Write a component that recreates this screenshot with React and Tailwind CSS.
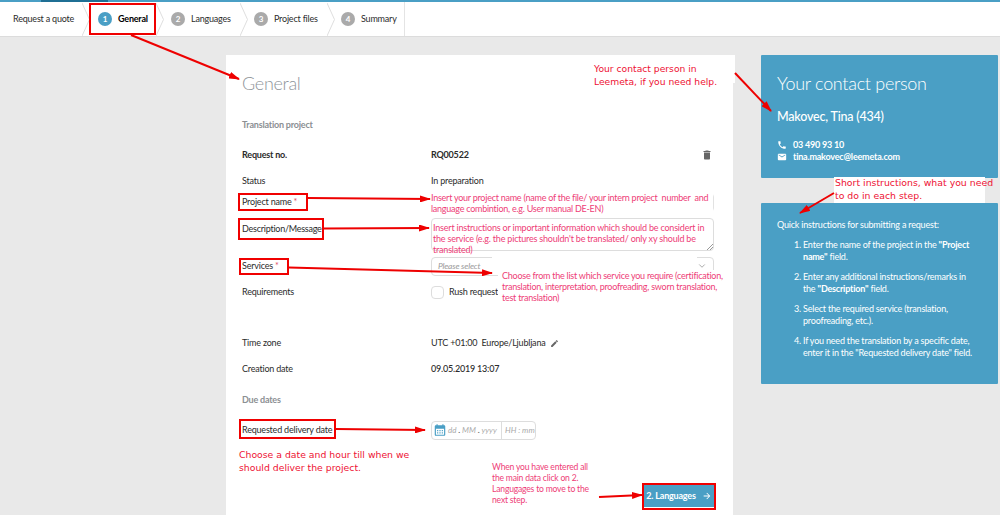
import React from "react";
import { ChevronDown } from "lucide-react";
import { MdDelete, MdPhone, MdEmail, MdEdit, MdArrowForward, MdCalendarMonth } from "react-icons/md";

const steps = [
  { n: 1, label: "General", active: true, cls: "w-[66px] pl-[8px]" },
  { n: 2, label: "Languages", cls: "w-[76px] pl-[7px]" },
  { n: 3, label: "Project files", cls: "w-[79px] pl-[6px]" },
  { n: 4, label: "Summary", cls: "w-[69px] pl-[6px]" },
];

const Chevron = () => (
  <svg width="8" height="33" viewBox="0 0 8 33" className="shrink-0" fill="none" stroke="#dedede">
    <path d="M0 0 L7.5 16.5 L0 33" />
  </svg>
);

const Row = ({ label, bold, height, req, align = "items-center", labelClass = "", children }) => (
  <div className={`flex ${align} ${height}`}>
    <div className={`w-[189px] shrink-0 ${labelClass} ${bold ? "font-bold" : ""}`}>
      {label}
      {req && <span className="text-[#e0506a]"> *</span>}
    </div>
    <div className="flex-1">{children}</div>
  </div>
);

const Box = ({ className }) => <div className={`absolute border-2 border-[#f00000] ${className}`} />;

const Note = ({ className, children }) => (
  <div className={`absolute bg-white ${className}`}>{children}</div>
);

export default function App() {
  return (
    <div className="relative h-[515px] w-[1000px] overflow-hidden bg-[#e9e9e9] font-['Lato',sans-serif] text-[9px] tracking-[-0.2px] text-[#2b2b2b]">
      {/* top bar */}
      <header className="flex h-[37px] flex-col border-b border-[#dcdcdc] bg-white">
        <div className="h-[2px] shrink-0 bg-[#4a9fc5]">
          <div className="ml-[41px] h-full w-[67px] bg-[#1f6f94]" />
        </div>
        <div className="flex flex-1 items-center">
          <span className="ml-[13px] w-[69px]">Request a quote</span>
          <Chevron />
          {steps.map((s) => (
            <React.Fragment key={s.n}>
              <div className={`flex items-center ${s.cls}`}>
                <span className={`flex h-[14px] w-[14px] shrink-0 items-center justify-center rounded-full text-[8px] font-bold text-white ${s.active ? "bg-[#4a9fc5]" : "bg-[#aaaaaa]"}`}>
                  {s.n}
                </span>
                <span className={`ml-[6px] whitespace-nowrap ${s.active ? "font-bold text-black" : ""}`}>{s.label}</span>
              </div>
              {s.n < 4 && <Chevron />}
            </React.Fragment>
          ))}
          <div className="h-full border-l border-[#e4e4e4]" />
        </div>
      </header>

      <main className="flex items-start pl-[226px] pt-[18px]">
        {/* form card */}
        <section className="h-[470px] w-[507px] bg-white px-[16px]">
          <h1 className="pt-[16px] text-[18px] leading-[24px] font-light tracking-[-0.3px] text-[#8f959a]">General</h1>
          <h2 className="mt-[24px] leading-[12px] font-bold text-[#8b8f93]">Translation project</h2>

          <div className="mt-[11px]">
            <Row label="Request no." bold height="h-[26px]">
              <div className="flex items-center justify-between pr-[4px]">
                <span className="font-bold">RQ00522</span>
                <MdDelete size={12} className="text-[#666666]" />
              </div>
            </Row>
            <Row label="Status" height="h-[25px]">In preparation</Row>
            <Row label="Project name" req height="h-[18px]">
              <div className="h-[19px] w-[283px] rounded-sm border border-[#e2e2e2]" />
            </Row>
            <Row label="Description/Message" align="items-start" labelClass="pt-[11px] tracking-[-0.25px]" height="h-[42px]">
              <div className="relative mt-[7px] h-[33px] w-[283px] rounded-sm border border-[#dddddd]">
                <svg className="absolute right-0 bottom-0" width="6" height="6" viewBox="0 0 6 6" stroke="#999999" fill="none">
                  <path d="M0 6 L6 0 M3 6 L6 3" />
                </svg>
              </div>
            </Row>
            <Row label="Services" req height="h-[26px]">
              <div className="flex h-[19px] w-[283px] items-center justify-between rounded-sm border border-[#dddddd] px-[6px] text-[8.5px] text-[#9a9a9a] italic">
                Please select
                <ChevronDown size={10} />
              </div>
            </Row>
            <Row label="Requirements" height="h-[26px]">
              <label className="flex items-center gap-[5px]">
                <span className="h-[13px] w-[13px] rounded-sm border border-[#dddddd]" />
                Rush request
              </label>
            </Row>
            <div className="h-[25px]" />
            <Row label="Time zone" height="h-[26px]">
              <span className="flex items-center gap-[4px]">
                UTC +01:00&nbsp; Europe/Ljubljana <MdEdit size={9} className="text-[#666666]" />
              </span>
            </Row>
            <Row label="Creation date" height="h-[26px]">
              <span className="font-medium">09.05.2019 13:07</span>
            </Row>
          </div>

          <h2 className="mt-[12px] leading-[12px] font-bold text-[#8b8f93]">Due dates</h2>

          <div className="mt-[14px]">
            <Row label="Requested delivery date" height="h-[20px]">
              <div className="flex h-[19px] w-[105px] items-center rounded-sm border border-[#dddddd] text-[8px] tracking-normal text-[#aaaaaa] italic">
                <MdCalendarMonth size={14} className="ml-[1px] shrink-0 text-[#4a9fc5]" />
                <span className="ml-[1px] w-[53px] shrink-0 whitespace-pre">dd <b className="text-[#666666] not-italic">.</b> MM <b className="text-[#666666] not-italic">.</b> yyyy</span>
                <span className="h-full border-l border-[#dddddd] pl-[3px] leading-[17px] whitespace-pre">HH : mm</span>
              </div>
            </Row>
          </div>

          <div className="mt-[45px] flex justify-end pr-[3px]">
            <button className="flex h-[22px] w-[70px] items-center justify-center gap-[6px] bg-[#4a9fc5] font-bold text-white">
              2. Languages <MdArrowForward size={10} />
            </button>
          </div>
        </section>

        {/* right column */}
        <aside className="ml-[28px] w-[237px] text-white">
          <div className="h-[123px] rounded-[1px] bg-[#4a9fc5] px-[16px] pt-[16px]">
            <h2 className="text-[18px] leading-[24px] font-light tracking-[-0.3px] text-white">Your contact person</h2>
            <p className="mt-[14px] text-[12.5px] leading-[16px] font-medium">Makovec, Tina (434)</p>
            <p className="mt-[14px] flex items-center gap-[6px] leading-[12px] font-bold">
              <MdPhone size={10} /> 03 490 93 10
            </p>
            <p className="flex items-center gap-[6px] leading-[12px] font-bold">
              <MdEmail size={10} /> tina.makovec@leemeta.com
            </p>
          </div>
          <div className="mt-[25px] h-[181px] rounded-[1px] bg-[#4a9fc5] px-[16px] pt-[16px] leading-[12px]">
            <p>Quick instructions for submitting a request:</p>
            <ol className="mt-[8px] list-decimal space-y-[8px] pr-[10px] pl-[26px]">
              <li>Enter the name of the project in the <b>"Project name"</b> field.</li>
              <li>Enter any additional instructions/remarks in the <b>"Description"</b> field.</li>
              <li>Select the required service (translation, proofreading, etc.).</li>
              <li>If you need the translation by a specific date, enter it in the "Requested delivery date" field.</li>
            </ol>
          </div>
        </aside>
      </main>

      {/* annotations drawn over the page */}
      <Note className="left-[560px] top-[55px] h-[28px] w-[175px]" />
      <Note className="left-[834px] top-[177px] h-[26px] w-[151px]" />
      <div className="absolute left-[594px] top-[62px] font-['DejaVu_Sans',sans-serif] text-[9.2px] leading-[13px] tracking-normal text-[#ee1133]">
        Your contact person in<br />Leemeta, if you need help.
      </div>
      <div className="absolute left-[835px] top-[176px] font-['DejaVu_Sans',sans-serif] text-[9.35px] leading-[13px] tracking-normal text-[#ee1133]">
        Short instructions, what you need<br />to do in each step.
      </div>
      <div className="absolute left-[239px] top-[448px] font-['DejaVu_Sans',sans-serif] text-[9.3px] leading-[13px] tracking-normal text-[#ee1133]">
        Choose a date and hour till when we<br />should deliver the project.
      </div>

      <Note className="left-[430px] top-[191px] h-[21px] w-[283px] pl-[1px] pt-[1px] leading-[11px] tracking-[-0.25px] text-[#ee3d77]">
        Insert your project name (name of the file/ your intern project&nbsp; number&nbsp; and<br />
        language combintion, e.g. User manual DE-EN)
      </Note>
      <div className="absolute left-[433px] top-[222px] leading-[11px] text-[#ee3d77]">
        Insert instructions or important information which should be considert in<br />
        the service (e.g. the pictures shouldn't be translated/ only xy should be<br />
        translated)
      </div>
      <Note className="left-[492px] top-[256px] h-[3px] w-[205px]" />
      <Note className="left-[498px] top-[270px] h-[33px] w-[228px] pl-[4px] leading-[11px] tracking-[-0.25px] text-[#ee3d77]">
        Choose from the list which service you require (certification,<br />
        translation, interpretation, proofreading, sworn translation,<br />
        test translation)
      </Note>
      <div className="absolute left-[492px] top-[462px] text-[8.6px] leading-[11px] text-[#ee3d77]">
        When you have entered all<br />the main data click on 2.<br />Langugages to move to the<br />next step.
      </div>

      <Box className="left-[89px] top-[3px] h-[32px] w-[67px]" />
      <Box className="left-[238px] top-[193px] h-[18px] w-[70px]" />
      <Box className="left-[238px] top-[218px] h-[22px] w-[86px]" />
      <Box className="left-[239px] top-[258px] h-[17px] w-[50px]" />
      <Box className="left-[239px] top-[419px] h-[20px] w-[97px]" />
      <Box className="left-[642px] top-[483px] h-[27px] w-[74px]" />

      <svg className="absolute inset-0 h-full w-full" viewBox="0 0 1000 515" fill="none" stroke="#ee0000" strokeWidth="2">
        <defs>
          <marker id="head" markerWidth="11" markerHeight="7" refX="10" refY="3.5" orient="auto" markerUnits="userSpaceOnUse">
            <path d="M0 0 L11 3.5 L0 7 Z" fill="#ee0000" stroke="none" />
          </marker>
        </defs>
        <path d="M131 35 L239 79" markerEnd="url(#head)" />
        <path d="M735 73 L771 111" markerEnd="url(#head)" />
        <path d="M834 193 L800 213" markerEnd="url(#head)" />
        <path d="M308 198 L430 199" markerEnd="url(#head)" />
        <path d="M324 228.5 L429 228" markerEnd="url(#head)" />
        <path d="M289 267.5 L492 273" markerEnd="url(#head)" />
        <path d="M336 429 L425 430" markerEnd="url(#head)" />
        <path d="M599 497 L642 495" markerEnd="url(#head)" />
      </svg>
    </div>
  );
}
